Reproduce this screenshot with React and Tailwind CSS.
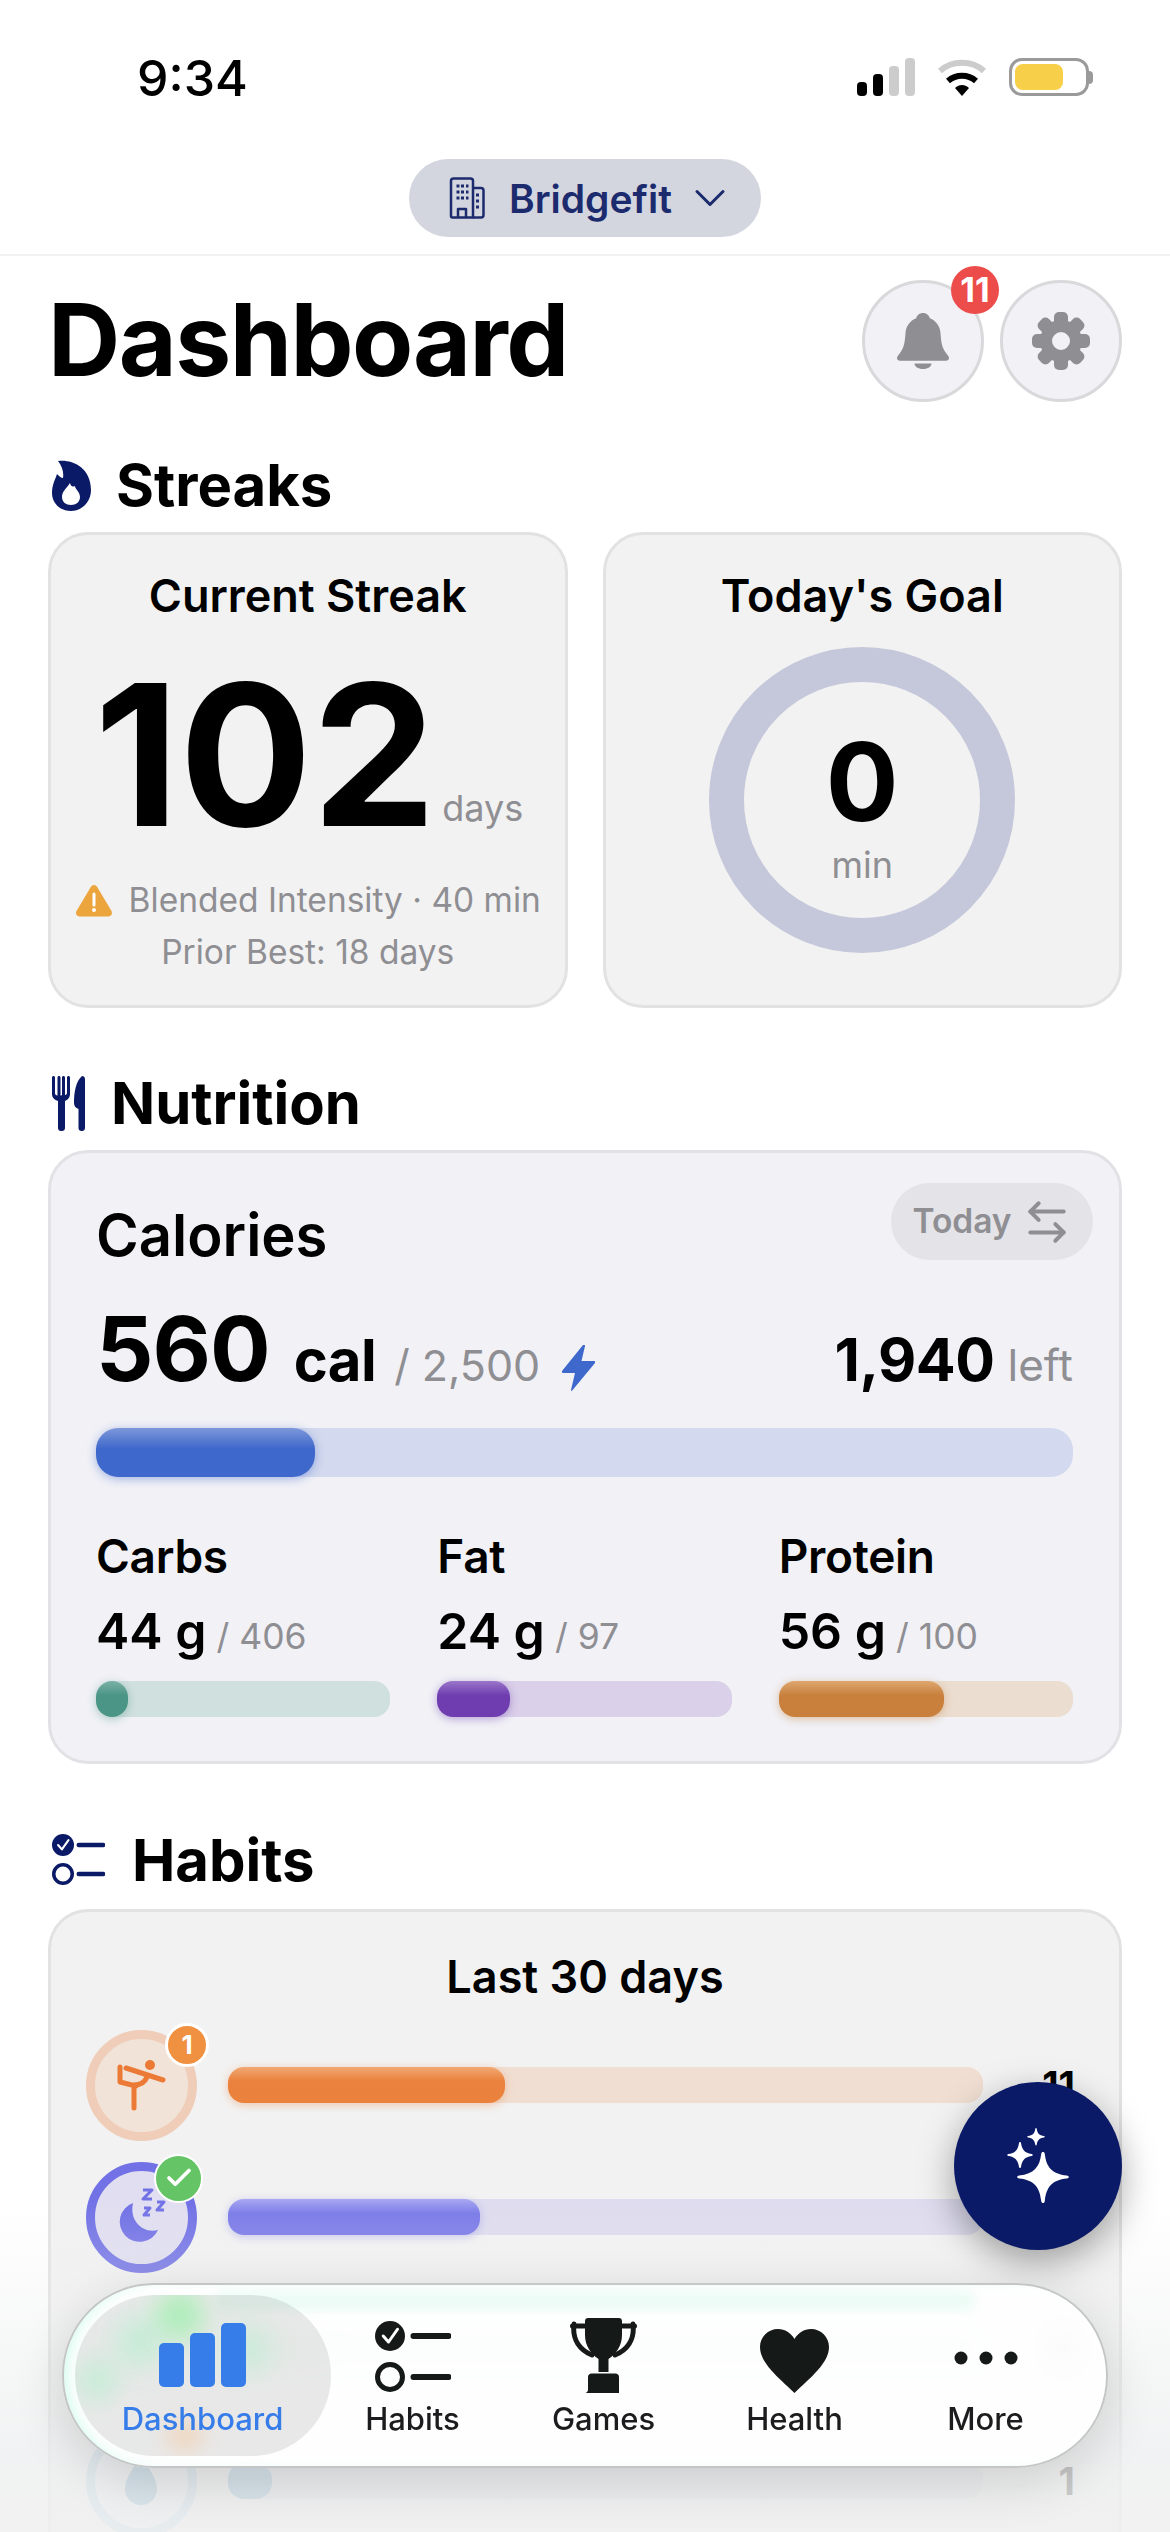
import React from 'react';
import { ArrowLeftRight, ChevronDown, Check } from 'lucide-react';

const NAVY = '#0b1a66';

const Flame = () => (
  <svg width="39" height="51" viewBox="0 0 39 51" fill="#0b1a66">
    <path
      fillRule="evenodd"
      d="M6 1C18-1 39 6 39 30c0 12-9 21-20 21S0 43 0 33c0-8 3-13 5-19 2 2 4 4 6 4 1-6-1-12-5-17zM18 23c1 4 3 4 5 3 0 3 5 6 5 11 0 5-4 8-9 8s-9-3-9-8c0-6 5-9 8-14z"
    />
  </svg>
);

const Utensils = () => (
  <svg width="33" height="55" viewBox="0 0 33 55" fill="#0b1a66">
    <path d="M1.500 0c.8 0 1.500.7 1.500 1.500V17c0 1.500.8 2.500 2.500 2.500V1.500C5.500.7 6.200 0 7 0s1.500.7 1.500 1.500v18c.8 0 1.500-.2 1.500-.2V1.500C10 .7 10.700 0 11.500 0s1.500.7 1.500 1.500V19c.6 0 2-.5 2-2V1.500C15 .7 15.700 0 16.500 0s1.500.7 1.500 1.500V18c0 3.500-2.400 6-5 7v27c0 1.700-1.300 3-3 3H9c-1.700 0-3-1.300-3-3V25c-3.500-1-6-3.500-6-7V1.500C0 .7.700 0 1.500 0z" />
    <path d="M30 0c1.700 0 3 1.300 3 3v49c0 1.700-1.300 3-3 3h-.5c-1.700 0-3-1.300-3-3V33c-3-1-4.500-3-4.500-6 0-11 2-22 8-27z" />
  </svg>
);

const ChecklistIcon = ({ color, width = 55, gap = 8, mark = 'white', r = 15, sw = 5, dash = 38 }) => {
  const h = r * 4 + gap + 2;
  return (
    <svg width={width} height={h} viewBox={`0 0 ${width} ${h}`} fill="none">
      <circle cx={r} cy={r} r={r} fill={color} />
      <path
        d={`M${r * 0.55} ${r}l${r * 0.35} ${r * 0.4} ${r * 0.6}-${r * 0.85}`}
        stroke={mark}
        strokeWidth={sw * 0.6}
        strokeLinecap="round"
        strokeLinejoin="round"
      />
      <circle cx={r} cy={h - r - 1} r={r - sw / 2} stroke={color} strokeWidth={sw} />
      <path d={`M${width - dash + sw / 2} ${r}h${dash - sw}`} stroke={color} strokeWidth={sw + 1} strokeLinecap="round" />
      <path d={`M${width - dash + sw / 2} ${h - r - 1}h${dash - sw}`} stroke={color} strokeWidth={sw + 1} strokeLinecap="round" />
    </svg>
  );
};

const SectionTitle = ({ icon, gap, children }) => (
  <div className={`flex h-[70px] items-center pl-[4px] ${gap}`}>
    {icon}
    <h2 className="text-[58px] font-bold leading-none text-black">{children}</h2>
  </div>
);

const StatusBar = () => (
  <div className="flex h-[159px] items-start justify-between pt-[50px] pl-[137px] pr-[77px]">
    <span className="text-[50px] font-medium leading-[56px] text-black">9:34</span>
    <div className="mt-[8px] flex items-center gap-[22px]">
      <svg width="58" height="38" viewBox="0 0 58 38">
        <rect x="0" y="24" width="10" height="14" rx="4" fill="#000" />
        <rect x="16" y="16" width="10" height="22" rx="4" fill="#000" />
        <rect x="32" y="8" width="10" height="30" rx="4" fill="#ccc" />
        <rect x="48" y="0" width="10" height="38" rx="4" fill="#ccc" />
      </svg>
      <svg width="50" height="38" viewBox="0 0 50 38" fill="none">
        <path d="M3 13C15 2 35 2 47 13" stroke="#ccc" strokeWidth="6" />
        <path d="M11 23c8-7 20-7 28 0" stroke="#000" strokeWidth="6" />
        <path d="M18 30c4-4 10-4 14 0l-7 8z" fill="#000" />
      </svg>
      <div className="flex items-center">
        <div className="flex h-[38px] w-[80px] items-center rounded-[13px] border-[3px] border-[#9a9a9a] p-[3px]">
          <div className="h-full w-[70%] rounded-[8px] bg-[#f7cf48]" />
        </div>
        <div className="h-[13px] w-[4px] rounded-r-full bg-[#9a9a9a]" />
      </div>
    </div>
  </div>
);

const TenantPill = () => (
  <div className="flex justify-center border-b-2 border-[#f1f1f3] pb-[17px]">
    <div className="flex h-[78px] w-[352px] items-center rounded-full bg-[#d3d6df] pl-[40px] text-[#1c2a6e]">
      <svg width="36" height="42" viewBox="0 0 36 42" fill="none" stroke="#1c2a6e" strokeWidth="2.500" strokeLinejoin="round">
        <path d="M2 4c0-1.500 1-2.500 2.500-2.500h17c1.500 0 2.500 1 2.500 2.500v36.500H3.500C2.500 40.500 2 40 2 39z" />
        <path d="M24 11h8c1.500 0 2.500 1 2.500 2.500V38c0 1.500-1 2.500-2.500 2.500h-8" />
        <path d="M9 40v-8h8v8" />
        <path d="M7.500 9h3M12 9h3M17 9h2.500M7.500 15h3M12 15h3M17 15h2.500M7.500 21h3M12 21h3M17 21h2.500M27 18h3M27 24h3M27 30h3" strokeWidth="3" />
      </svg>
      <span className="ml-[24px] text-[39px] font-semibold leading-none">Bridgefit</span>
      <ChevronDown className="ml-[12px]" size={52} strokeWidth={1.400} />
    </div>
  </div>
);

const RoundButton = ({ children }) => (
  <div className="flex h-[122px] w-[122px] items-center justify-center rounded-full border-[3px] border-[#d9d9dc] bg-[#f1f1f6]">
    {children}
  </div>
);

const Gear = () => (
  <svg width="58" height="58" viewBox="0 0 58 58" fill="#8e8e93">
    {[0, 45, 90, 135, 180, 225, 270, 315].map((a) => (
      <rect key={a} x="22" y="0" width="14" height="20" rx="5" transform={`rotate(${a} 29 29)`} />
    ))}
    <path fillRule="evenodd" d="M29 8a21 21 0 1 0 0 42 21 21 0 0 0 0-42zm0 12a9 9 0 1 1 0 18 9 9 0 0 1 0-18z" />
  </svg>
);

const TitleRow = () => (
  <div className="flex items-start justify-between pt-[24px]">
    <h1 className="text-[100px] font-bold leading-[120px] tracking-[-1.500px] text-black">Dashboard</h1>
    <div className="flex gap-[16px]">
      <div className="relative">
        <RoundButton>
          <svg width="52" height="56" viewBox="0 0 52 56" fill="#8e8e93">
            <path d="M26 0c-3.400 0-6 2.200-6.800 5.200C13 7.600 9 13 8.500 20c-.6 8-1 14-5.500 20-2 2.600-3 3.800-3 5 0 1.600 1.200 2.800 3 2.800h46c1.800 0 3-1.200 3-2.800 0-1.200-1-2.400-3-5-4.500-6-4.900-12-5.500-20C43 13 39 7.600 32.800 5.200 32 2.200 29.400 0 26 0z" />
            <path d="M17.500 50.500h17c0 3-3.500 5.500-8.500 5.500s-8.500-2.500-8.500-5.500z" />
          </svg>
        </RoundButton>
        <div className="absolute right-[-15px] top-[-14px] flex h-[48px] w-[48px] items-center justify-center rounded-full bg-[#ec4c4a] text-[34px] font-bold leading-none text-white">
          11
        </div>
      </div>
      <RoundButton>
        <Gear />
      </RoundButton>
    </div>
  </div>
);

const StreakCards = () => (
  <div className="grid grid-cols-2 gap-[35px]">
    <div className="flex h-[476px] flex-col items-center rounded-[40px] border-[3px] border-[#e2e2e2] bg-[#f2f2f2] pt-[33px]">
      <div className="text-[45px] font-semibold leading-[56px] text-black">Current Streak</div>
      <div className="mt-[30px] flex h-[190px] items-end pl-[2px]">
        <span className="text-[197px] font-bold leading-[178px] text-black">102</span>
        <span className="mb-[18px] ml-[6px] text-[36px] leading-none text-[#8e8e93]">days</span>
      </div>
      <div className="mt-[31px] flex items-center gap-[16px] text-[33.500px] leading-[50px] text-[#8e8e93]">
        <svg width="38" height="34" viewBox="0 0 38 34">
          <path d="M19 2c1.300 0 2.500.7 3.200 2L36.500 28c1.400 2.500-.4 5.500-3.200 5.500H4.700C1.900 33.500.1 30.500 1.500 28L15.800 4C16.500 2.700 17.700 2 19 2z" fill="#eba53c" />
          <path d="M19 11v11" stroke="#fff" strokeWidth="3" strokeLinecap="round" />
          <circle cx="19" cy="27" r="2" fill="#fff" />
        </svg>
        <span>Blended Intensity · 40 min</span>
      </div>
      <div className="mt-[2px] text-[33.500px] leading-[50px] text-[#8e8e93]">Prior Best: 18 days</div>
    </div>
    <div className="flex h-[476px] flex-col items-center rounded-[40px] border-[3px] border-[#e2e2e2] bg-[#f2f2f2] pt-[33px]">
      <div className="text-[45px] font-semibold leading-[56px] text-black">Today's Goal</div>
      <div className="relative mt-[23px] flex h-[306px] w-[306px] flex-col items-center justify-center rounded-full border-[35px] border-[#c5c8da] pt-[14px]">
        <span className="text-[108px] font-bold leading-[110px] text-black">0</span>
        <span className="mt-[6px] text-[36px] leading-[44px] text-[#8e8e93]">min</span>
      </div>
    </div>
  </div>
);

const Bar = ({ height, track, fill, width, radius }) => (
  <div className={`w-full ${height} ${track} ${radius}`}>
    <div className={`h-full ${fill} ${radius}`} style={{ width }} />
  </div>
);

const macros = [
  {
    label: 'Carbs',
    value: '44 g',
    goal: '/ 406',
    pct: 32,
    track: 'bg-[#d0e0df]',
    fill: 'bg-[linear-gradient(#7cb1a6,#4a9585_40%)] shadow-[0_2px_8px_rgba(74,149,133,0.45)]',
  },
  {
    label: 'Fat',
    value: '24 g',
    goal: '/ 97',
    pct: 73,
    track: 'bg-[#dad0e9]',
    fill: 'bg-[linear-gradient(#9a76c9,#6f3db0_40%)] shadow-[0_2px_8px_rgba(111,61,176,0.45)]',
  },
  {
    label: 'Protein',
    value: '56 g',
    goal: '/ 100',
    pct: 165,
    track: 'bg-[#ebddd0]',
    fill: 'bg-[linear-gradient(#dea76f,#c8803c_40%)] shadow-[0_2px_8px_rgba(200,128,60,0.45)]',
  },
];

const NutritionCard = () => (
  <div className="h-[614px] rounded-[40px] border-[3px] border-[#e2e2e6] bg-[#f1f1f6] pl-[45px] pr-[46px]">
    <div className="flex items-start justify-between">
      <div className="mt-[47px] text-[58px] font-semibold leading-[70px] text-black">Calories</div>
      <div className="mr-[-20px] mt-[30px] flex h-[77px] w-[202px] items-center justify-center gap-[10px] rounded-full bg-[#e3e3e8] text-[33.500px] font-semibold text-[#8e8e93]">
        Today
        <ArrowLeftRight size={50} strokeWidth={1.900} />
      </div>
    </div>
    <div className="mt-[29px] flex h-[100px] items-baseline">
      <span className="text-[90px] font-bold leading-[100px] tracking-[-1px] text-black">560</span>
      <span className="ml-[24px] text-[58px] font-bold leading-none tracking-[-0.5px] text-black">cal</span>
      <span className="ml-[18px] text-[43px] leading-none text-[#8e8e93]">/ 2,500</span>
      <svg className="ml-[22px] self-end mb-[8px]" width="33" height="46" viewBox="0 0 33 46" fill="#3f68cc">
        <path d="M21 0 0 26c-.8 1 0 2 1 2h12L9 45c-.2 1 .6 1.300 1.200.6L33 18c.7-1 0-2-1-2H19.500L23 1c.3-1-1.200-1.800-2-1z" />
      </svg>
      <span className="ml-auto text-[59px] font-bold leading-none tracking-[-0.5px] text-black">1,940</span>
      <span className="ml-[13px] text-[44px] leading-none text-[#8e8e93]">left</span>
    </div>
    <div className="mt-[29px]">
      <Bar
        height="h-[49px]"
        track="bg-[#d3d9ee]"
        radius="rounded-[22px]"
        fill="bg-[linear-gradient(#7d97d9,#3f68cc_42%)] shadow-[0_2px_10px_rgba(63,104,204,0.45)]"
        width="219px"
      />
    </div>
    <div className="mt-[51px] grid grid-cols-3 gap-[47px]">
      {macros.map((m) => (
        <div key={m.label}>
          <div className="text-[46px] font-semibold leading-[56px] tracking-[-0.3px] text-black">{m.label}</div>
          <div className="mt-[22px] flex h-[60px] items-baseline">
            <span className="text-[50px] font-semibold leading-none text-black">{m.value}</span>
            <span className="ml-[10px] text-[35.500px] leading-none text-[#8e8e93]">{m.goal}</span>
          </div>
          <div className="mt-[15px]">
            <Bar height="h-[36px]" track={m.track} radius="rounded-[16px]" fill={m.fill} width={`${m.pct}px`} />
          </div>
        </div>
      ))}
    </div>
  </div>
);

const YogaIcon = () => (
  <svg width="93" height="93" viewBox="9 9 93 93" fill="none" stroke="#ea7a35" strokeWidth="5" strokeLinecap="round" strokeLinejoin="round">
    <circle cx="64" cy="35" r="5" fill="#ea7a35" stroke="none" />
    <path d="M40 38 77 50" />
    <path d="M34 37v15l16 4" />
    <path d="M48 78V55c7 0 11-3 13-8" />
  </svg>
);

const SleepIcon = () => (
  <svg width="93" height="93" viewBox="9 9 93 93" fill="none">
    <path d="M47 41a20 20 0 1 0 25 27c-15 4-29-9-25-27z" fill="#7272e6" />
    <path d="M57 28h9l-9 9h9M71 40h7l-7 8h7M58 46h6l-6 7h6" stroke="#7272e6" strokeWidth="3" strokeLinejoin="round" />
  </svg>
);

const DropIcon = () => (
  <svg width="93" height="93" viewBox="0 0 93 93" fill="#5a9fc9">
    <path d="M46 20C40 32 30 42 30 54a16 16 0 0 0 32 0C62 42 52 32 46 20z" />
  </svg>
);

const habits = [
  {
    key: 'yoga',
    icon: <YogaIcon />,
    ring: 'border-[#efcdb8] bg-[#f2e3d8]',
    track: 'bg-[#f0ded2]',
    fill: 'bg-[linear-gradient(#f0a873,#ea813c_40%)] shadow-[0_2px_8px_rgba(234,129,60,0.4)]',
    width: 277,
    count: '11',
    badge: (
      <div className="absolute right-[-21px] top-[-16px] flex h-[44px] w-[44px] items-center justify-center rounded-full border-[3px] border-white bg-[#ef9140] text-[26px] font-bold leading-none text-white">
        1
      </div>
    ),
  },
  {
    key: 'sleep',
    icon: <SleepIcon />,
    ring: 'border-[#7272e6] bg-[#e0def0]',
    track: 'bg-[#dedcee]',
    fill: 'bg-[linear-gradient(#a9a8f2,#7a7ae8_40%)] shadow-[0_2px_8px_rgba(122,122,232,0.4)]',
    width: 252,
    count: '9',
    badge: (
      <div className="absolute right-[-15px] top-[-17px] flex h-[49px] w-[49px] items-center justify-center rounded-full border-[2px] border-white bg-[#65c466] text-white">
        <Check size={30} strokeWidth={3} />
      </div>
    ),
  },
  {
    key: 'steps',
    icon: null,
    ring: 'border-[#c8f5dc] bg-[#e6f7ec]',
    track: 'bg-[#c8f7dc]',
    fill: 'bg-[linear-gradient(#b6f0c8,#9ce8b6_40%)]',
    width: 100,
    count: '5',
  },
  {
    key: 'water',
    icon: <DropIcon />,
    ring: 'border-[#a9d2e8] bg-[#e6f0f5]',
    track: 'bg-[#dde2e6]',
    fill: 'bg-[linear-gradient(#7db8dc,#5a9fc9_40%)]',
    width: 44,
    count: '1',
  },
];

const HabitRow = ({ habit }) => (
  <div className="flex h-[132px] items-center">
    <div className={`relative flex h-[111px] w-[111px] shrink-0 items-center justify-center rounded-full border-[9px] ${habit.ring}`}>
      {habit.icon}
      {habit.badge}
    </div>
    <div className="ml-[31px] w-[755px]">
      <Bar height="h-[36px]" track={habit.track} radius="rounded-[16px]" fill={habit.fill} width={`${habit.width}px`} />
    </div>
    <span className="ml-auto text-[38px] font-bold leading-none text-black">{habit.count}</span>
  </div>
);

const HabitsCard = () => (
  <div className="h-[640px] rounded-t-[40px] border-[3px] border-b-0 border-[#e2e2e2] bg-[#f2f2f2] pl-[35px] pr-[44px]">
    <div className="mt-[37px] h-[56px] pl-[9px] text-center text-[45px] font-semibold leading-[56px] text-black">Last 30 days</div>
    <div className="mt-[14px]">
      {habits.map((h) => (
        <HabitRow key={h.key} habit={h} />
      ))}
    </div>
  </div>
);

const Sparkles = () => (
  <svg width="62" height="76" viewBox="0 0 62 76" fill="#fff">
    <path d="M36 24c1 0 1.500.6 1.800 2 1.500 13 7 20 22 21.500 1.200.1 2 .8 2 1.500s-.8 1.400-2 1.500C45 52 39.300 59 37.800 73c-.3 1.500-.8 2-1.800 2s-1.500-.5-1.800-2C32.700 59 27 52 12.200 50.500c-1.200-.1-2-.8-2-1.500s.8-1.400 2-1.500C27 46 32.700 39 34.200 26c.3-1.400.8-2 1.800-2z" />
    <path d="M13 14c.6 0 .9.400 1 1 1 7 4 10 10.500 11 .8.100 1.200.4 1.200 1s-.4.900-1.200 1C18 29 15 32 14 39c-.1.600-.4 1-1 1s-.9-.4-1-1c-1-7-4-10-10.500-11C.7 27.900.3 27.600.3 27s.4-.9 1.200-1C8 25 11 22 12 15c.1-.6.400-1 1-1z" />
    <path d="M29 0c.4 0 .6.200.7.700.6 4.600 2.700 6.700 7.300 7.300.5.100.7.300.7.700s-.2.600-.7.700c-4.600.6-6.700 2.700-7.300 7.300-.1.500-.3.700-.7.700s-.6-.2-.7-.7c-.6-4.600-2.700-6.700-7.300-7.300-.5-.1-.7-.3-.7-.7s.2-.6.700-.7c4.600-.6 6.700-2.700 7.300-7.300.1-.5.300-.7.700-.7z" />
  </svg>
);

const navItems = [
  {
    label: 'Dashboard',
    active: true,
    icon: (
      <svg className="mb-[6px]" width="87" height="64" viewBox="0 0 87 64" fill="#377dea">
        <rect x="0" y="20" width="25" height="44" rx="5" />
        <rect x="31" y="10" width="25" height="54" rx="5" />
        <rect x="62" y="0" width="25" height="64" rx="5" />
      </svg>
    ),
  },
  { label: 'Habits', icon: <ChecklistIcon color="#151a18" width={76} r={15} gap={10} sw={5} dash={40} /> },
  {
    label: 'Games',
    icon: (
      <svg width="67" height="75" viewBox="0 0 67 75" fill="#151a18">
        <path d="M2.500 8h12M52.500 8h12M4 6c-2 16 6 26 18 31M63 6c2 16-6 26-18 31" fill="none" stroke="#151a18" strokeWidth="5" strokeLinecap="round" />
        <path d="M15 3c0-1.700 1.300-3 3-3h31c1.700 0 3 1.300 3 3v14c0 11-6 19-13.500 24V54h-10V41C21 36 15 28 15 17z" />
        <path d="M18 59c0-2 1.500-3.500 3.500-3.500h24c2 0 3.500 1.500 3.500 3.500v16H15c1.500 0 3-1.500 3-3z" />
      </svg>
    ),
  },
  {
    label: 'Health',
    icon: (
      <svg width="69" height="64" viewBox="0 0 69 64" fill="#151a18">
        <path d="M34.500 64C18 48 0 34 0 18 0 8 8 0 18 0c7 0 13 4 16.500 10C38 4 44 0 51 0c10 0 18 8 18 18 0 16-18 30-34.500 46z" />
      </svg>
    ),
  },
  {
    label: 'More',
    icon: (
      <svg width="64" height="14" viewBox="0 0 64 14" fill="#151a18">
        <circle cx="7" cy="7" r="6.500" />
        <circle cx="32" cy="7" r="6.500" />
        <circle cx="57" cy="7" r="6.500" />
      </svg>
    ),
  },
];

const NavBar = () => (
  <div className="absolute left-[62px] top-[2283px] flex h-[185px] w-[1046px] rounded-[92px] border-2 border-[#c4c6c6] bg-white/90 pl-[43px] shadow-[0_14px_50px_rgba(0,0,0,0.14),inset_10px_0_14px_-8px_rgba(170,250,225,0.6)] backdrop-blur-[14px]">
    <div className="absolute left-[150px] right-[130px] top-[6px] h-[20px] rounded-full bg-[#e6fbf2]/70 blur-[4px]" />
    {navItems.map((item) => (
      <div key={item.label} className={`relative flex w-[191px] flex-col items-center ${item.active ? 'mr-[19px]' : ''}`}>
        {item.active && (
          <div className="absolute -left-[32px] -right-[33px] top-[10px] h-[161px] overflow-hidden rounded-[80px] bg-[#6e6e6e]/15">
            <div className="absolute left-[80px] top-[-5px] h-[50px] w-[50px] rounded-full bg-[#8cf09c]/60 blur-[12px]" />
            <div className="absolute left-[40px] top-[22px] h-[50px] w-[50px] rounded-full bg-[#9cf0c0]/45 blur-[14px]" />
            <div className="absolute left-[0px] top-[63px] h-[44px] w-[44px] rounded-full bg-[#9cf0c0]/40 blur-[12px]" />
            <div className="absolute left-[147px] top-[29px] h-[50px] w-[50px] rounded-full bg-[#9cf0c0]/35 blur-[14px]" />
            <div className="absolute left-[92px] top-[126px] h-[30px] w-[36px] rounded-full bg-[#f8c898]/50 blur-[10px]" />
          </div>
        )}
        <div className="relative flex h-[110px] items-end pb-[2px]">
          <div className={item.label === 'More' ? 'mb-[28px]' : ''}>{item.icon}</div>
        </div>
        <span className={`relative mt-[4px] text-[31px] font-medium leading-[40px] ${item.active ? 'text-[#377dea]' : 'text-[#1c1c1e]'}`}>
          {item.label}
        </span>
      </div>
    ))}
  </div>
);

const App = () => {
  return (
    <div className="relative h-[2532px] w-full overflow-hidden bg-white font-['Inter',sans-serif]">
      <StatusBar />
      <TenantPill />
      <div className="px-[48px]">
        <TitleRow />
        <div className="mt-[48px]">
          <SectionTitle icon={<Flame />} gap="gap-[25px]">Streaks</SectionTitle>
        </div>
        <div className="mt-[12px]">
          <StreakCards />
        </div>
        <div className="mt-[60px]">
          <SectionTitle icon={<Utensils />} gap="gap-[26px]">Nutrition</SectionTitle>
        </div>
        <div className="mt-[12px]">
          <NutritionCard />
        </div>
        <div className="mt-[61px]">
          <SectionTitle icon={<ChecklistIcon color={NAVY} width={53} r={11} gap={6} sw={3.500} dash={28} />} gap="gap-[27px]">Habits</SectionTitle>
        </div>
        <div className="mt-[14px]">
          <HabitsCard />
        </div>
      </div>

      {/* fade under the tab bar */}
      <div className="pointer-events-none absolute inset-x-0 bottom-0 h-[330px] bg-[linear-gradient(rgba(240,240,240,0),rgba(238,239,240,0.8)_75%,rgba(240,240,240,0.88))]" />

      <div className="absolute right-[48px] top-[2082px] flex h-[168px] w-[168px] items-center justify-center rounded-full bg-[#0b1a66] shadow-[0_12px_36px_rgba(0,0,0,0.35)]">
        <Sparkles />
      </div>
      <NavBar />
    </div>
  );
};

export default App;
